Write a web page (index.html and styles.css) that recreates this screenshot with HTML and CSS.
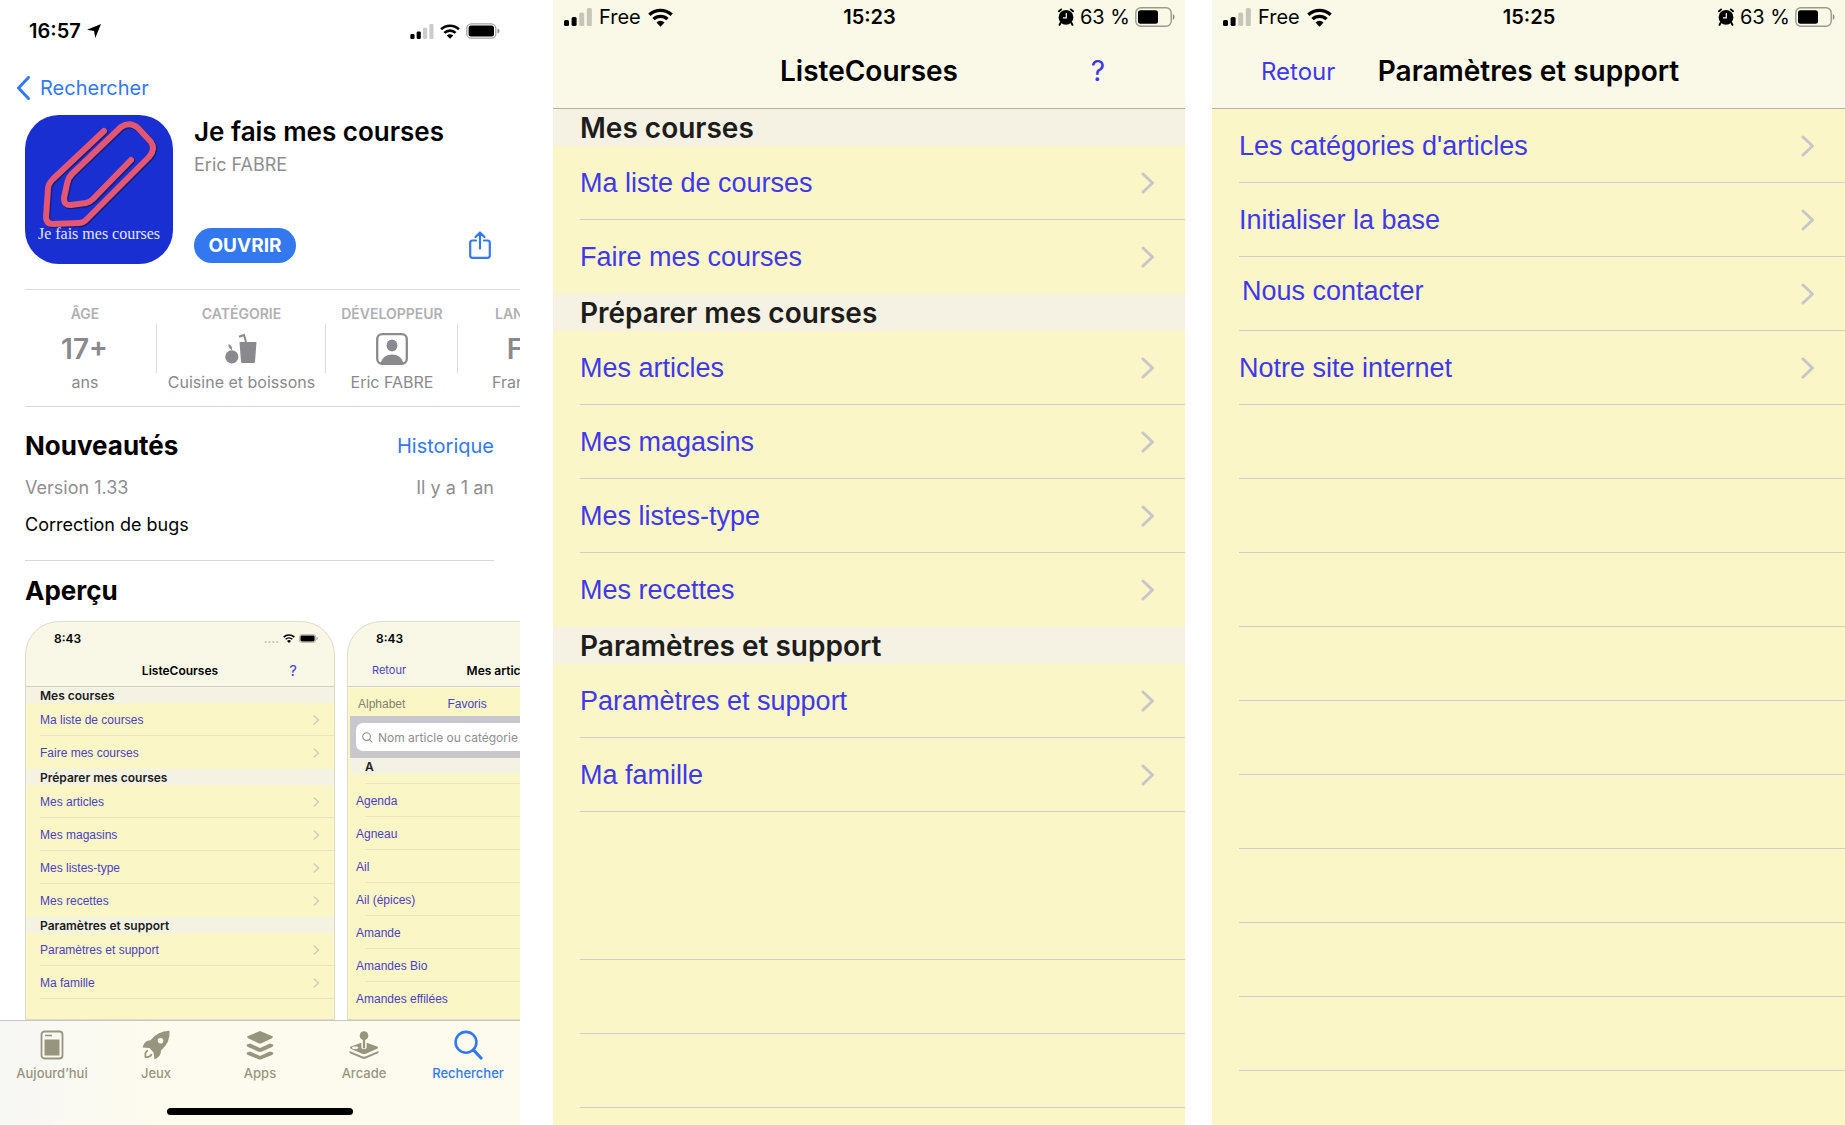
FILE: index.html
```html
<!DOCTYPE html>
<html lang="fr">
<head>
<meta charset="utf-8">
<meta name="viewport" content="width=device-width, initial-scale=1">
<title>Je fais mes courses</title>
<link rel="stylesheet" href="styles.css">
</head>
<body>
<svg class="sprite" aria-hidden="true">
  <symbol id="signal" viewBox="0 0 28 18">
    <rect x="0" y="12" width="5" height="6" rx="1.5"/>
    <rect x="7.600" y="9" width="5" height="9" rx="1.500"/>
    <g class="faint"><rect x="15.200" y="4.500" width="5" height="13.500" rx="1.500"/><rect x="22.800" y="0" width="5" height="18" rx="1.500"/></g>
  </symbol>
  <symbol id="wifi" viewBox="0 0 24 18">
    <g fill="none" stroke="currentColor" stroke-width="3.200">
      <path d="M1.300 6.400 A15.500 15.500 0 0 1 22.700 6.400"/>
      <path d="M5.300 10.600 A9.600 9.600 0 0 1 18.700 10.600"/>
    </g>
    <path d="M12 17.800 L8.100 13.800 A5.600 5.600 0 0 1 15.900 13.800 Z"/>
  </symbol>
  <symbol id="battery-full" viewBox="0 0 34 16">
    <rect x=".8" y=".8" width="29" height="14.400" rx="4.500" fill="none" stroke="#a5a5a5" stroke-width="1.300"/>
    <rect x="2.600" y="2.600" width="25.400" height="10.800" rx="2.500"/>
    <path d="M31.500 5.500 Q33.500 6.400 33.500 8 Q33.500 9.600 31.500 10.500Z" fill="#8c8c8c"/>
  </symbol>
  <symbol id="battery-part" viewBox="0 0 40 20">
    <rect x=".8" y=".8" width="35.400" height="18.400" rx="5" fill="none" stroke="#9b9a91" stroke-width="1.400"/>
    <rect x="3" y="3.200" width="20" height="13.600" rx="2.500"/>
    <path d="M37.800 7 Q39.600 8 39.600 10 Q39.600 12 37.800 13Z" fill="#8d8c84"/>
  </symbol>
  <symbol id="alarm" viewBox="0 0 18 18">
    <circle cx="9" cy="9.300" r="7.400"/>
    <path d="M2 3.300 L4.200 1.400 M16 3.300 L13.800 1.400 M3.800 14.500 L2.600 16.800 M14.200 14.500 L15.400 16.800" stroke="currentColor" stroke-width="1.900" stroke-linecap="round"/>
    <path d="M9.300 5 V9.800 H6" fill="none" stroke="#faf8e6" stroke-width="1.200"/>
  </symbol>
  <symbol id="chevron" viewBox="0 0 14 22">
    <path d="M2 2 L11.500 11 L2 20" fill="none" stroke="currentColor" stroke-width="3" stroke-linecap="round" stroke-linejoin="round"/>
  </symbol>
</svg>

<main class="board">
  <section class="store">
    <div class="store-status">
      <span class="clock">16:57</span>
      <svg class="arrow" viewBox="0 0 14 14"><path d="M14 0 L8.300 14 L7 7 L0 5.800Z"/></svg>
      <span class="status-icons">
        <svg class="i-signal small"><use href="#signal"/></svg>
        <svg class="i-wifi small"><use href="#wifi"/></svg>
        <svg class="i-full"><use href="#battery-full"/></svg>
      </span>
    </div>
    <a class="back" href="#">
      <svg viewBox="0 0 14 24"><path d="M12.500 1.500 L2.500 12 L12.500 22.500" fill="none" stroke="currentColor" stroke-width="3" stroke-linecap="round" stroke-linejoin="round"/></svg>
      Rechercher
    </a>

    <header class="app">
      <div class="app-icon">
        <svg viewBox="0 0 148 148">
          <path d="M79 16 L28 64 Q23 69 23 74 L21 102 Q21 109 28 109 L54 108 Q58 108 61 105 L124 42 Q131 34 126 27 L113 13 Q105 6 96 12 L47 59 Q43 63 42 69 L39 83 Q39 91 46 90 L61 88 Q65 87 68 84 L106 45" fill="none" stroke="#10207a" stroke-width="6.500" stroke-linecap="round" stroke-linejoin="round" transform="translate(1 1)"/>
          <path d="M79 16 L28 64 Q23 69 23 74 L21 102 Q21 109 28 109 L54 108 Q58 108 61 105 L124 42 Q131 34 126 27 L113 13 Q105 6 96 12 L47 59 Q43 63 42 69 L39 83 Q39 91 46 90 L61 88 Q65 87 68 84 L106 45" fill="none" stroke="#e55672" stroke-width="6" stroke-linecap="round" stroke-linejoin="round"/>
        </svg>
        <span class="app-icon-name">Je fais mes courses</span>
      </div>
      <div class="app-info">
        <h1>Je fais mes courses</h1>
        <p>Eric FABRE</p>
        <div class="app-actions">
          <button class="open" type="button">OUVRIR</button>
          <button class="share" type="button" aria-label="Partager">
            <svg viewBox="0 0 22 28"><path d="M7 9.500 H3.500 Q1.200 9.500 1.200 11.800 V24.500 Q1.200 26.800 3.500 26.800 H18.500 Q20.800 26.800 20.800 24.500 V11.800 Q20.800 9.500 18.500 9.500 H15 M11 17.500 V1.500 M6.500 6 L11 1.500 L15.500 6" fill="none" stroke="currentColor" stroke-width="2.200" stroke-linecap="round" stroke-linejoin="round"/></svg>
          </button>
        </div>
      </div>
    </header>

    <dl class="facts">
      <div><dt>ÂGE</dt><dd class="value">17+</dd><dd>ans</dd></div>
      <div class="wide"><dt>CATÉGORIE</dt><dd class="value">
        <svg viewBox="0 0 32 32"><circle cx="6.800" cy="23.800" r="6.600"/><path d="M7 17 Q3 15 3.500 11 Q7.500 12.500 7 17Z"/><path d="M14.500 9 H31.500 L30 28.500 Q29.900 30 28.400 30 H17.600 Q16.100 30 16 28.500Z"/><path d="M14 3.800 L19 2 L21 9" fill="none" stroke="currentColor" stroke-width="2"/></svg>
      </dd><dd>Cuisine et boissons</dd></div>
      <div><dt>DÉVELOPPEUR</dt><dd class="value">
        <svg viewBox="0 0 32 32"><rect x="1.200" y="1.200" width="29.600" height="29.600" rx="5" fill="none" stroke="currentColor" stroke-width="2.300"/><ellipse cx="16" cy="12.500" rx="5.400" ry="6"/><path d="M4.500 30 Q7 21.500 16 21.500 Q25 21.500 27.500 30Z"/></svg>
      </dd><dd>Eric FABRE</dd></div>
      <div><dt>LANGUE</dt><dd class="value">FR</dd><dd>Français</dd></div>
    </dl>

    <section class="news">
      <div class="pair"><h2>Nouveautés</h2><a href="#">Historique</a></div>
      <div class="pair version"><span>Version 1.33</span><span>Il y a 1 an</span></div>
      <p>Correction de bugs</p>
    </section>

    <section class="shots">
      <h2>Aperçu</h2>
      <div class="strip">
        <article class="shot">
          <div class="shot-status"><span>8:43</span><span class="dots">....</span><svg class="mini-wifi"><use href="#wifi"/></svg><svg class="mini-battery"><use href="#battery-full"/></svg></div>
          <div class="shot-nav"><span></span><strong>ListeCourses</strong><a class="help" href="#">?</a></div>
          <h3>Mes courses</h3>
          <ul>
            <li><a href="#">Ma liste de courses<svg><use href="#chevron"/></svg></a></li>
            <li><a href="#">Faire mes courses<svg><use href="#chevron"/></svg></a></li>
          </ul>
          <h3>Préparer mes courses</h3>
          <ul>
            <li><a href="#">Mes articles<svg><use href="#chevron"/></svg></a></li>
            <li><a href="#">Mes magasins<svg><use href="#chevron"/></svg></a></li>
            <li><a href="#">Mes listes-type<svg><use href="#chevron"/></svg></a></li>
            <li><a href="#">Mes recettes<svg><use href="#chevron"/></svg></a></li>
          </ul>
          <h3>Paramètres et support</h3>
          <ul class="closed">
            <li><a href="#">Paramètres et support<svg><use href="#chevron"/></svg></a></li>
            <li><a href="#">Ma famille<svg><use href="#chevron"/></svg></a></li>
          </ul>
        </article>
        <article class="shot second">
          <div class="shot-status"><span>8:43</span></div>
          <div class="shot-nav"><a href="#">Retour</a><strong>Mes articles</strong><span></span></div>
          <div class="modes"><span>Alphabet</span><a href="#">Favoris</a></div>
          <div class="search">
            <label>
              <svg viewBox="0 0 12 12"><path d="M8.400 8.400 L11.200 11.200 M9.200 5 A4.200 4.200 0 1 1 .8 5 A4.200 4.200 0 1 1 9.200 5" fill="none" stroke="currentColor" stroke-width="1.200"/></svg>
              <input type="search" placeholder="Nom article ou catégorie" aria-label="Nom article ou catégorie">
            </label>
          </div>
          <h3>A</h3>
          <ul class="foods">
            <li class="gap"></li>
            <li><a href="#">Agenda</a></li>
            <li><a href="#">Agneau</a></li>
            <li><a href="#">Ail</a></li>
            <li><a href="#">Ail (épices)</a></li>
            <li><a href="#">Amande</a></li>
            <li><a href="#">Amandes Bio</a></li>
            <li><a href="#">Amandes effilées</a></li>
          </ul>
        </article>
      </div>
    </section>

    <nav class="tabs">
      <div class="tab-row">
        <a href="#"><svg viewBox="0 0 30 30"><rect x="4.500" y="1.500" width="21" height="27" rx="3" fill="none" stroke="currentColor" stroke-width="1.800"/><rect x="7.500" y="9.500" width="15" height="16"/><path d="M8 5.500 H15" stroke="currentColor" stroke-width="1.600"/></svg>Aujourd’hui</a>
        <a href="#"><svg viewBox="0 0 30 30"><path fill-rule="evenodd" d="M28.500 .8 Q29.500 12.500 20 20.500 Q20.500 26 13.500 29.500 L12.500 22.500 L8.500 18 L1.500 17.500 Q3 10.500 9.500 10.300 Q16 1.500 28.500 .8Z M19.500 8 A2.800 2.800 0 1 0 19.600 13.600 A2.800 2.800 0 1 0 19.500 8Z"/><path d="M7 20.500 Q3.500 21.500 4.500 27 Q9.500 27.500 10.500 24" fill="none" stroke="currentColor" stroke-width="1.800"/></svg>Jeux</a>
        <a href="#"><svg viewBox="0 0 30 30"><path d="M15 1 L27 6 Q29 7 27 8.200 L17 13 Q15 14 13 13 L3 8.200 Q1 7 3 6Z"/><path d="M2 14.500 L5 13.500 L15 18 L25 13.500 L28 14.500 Q29 16 27 17 L17 21.500 Q15 22.400 13 21.500 L3 17 Q1 16 2 14.500Z"/><path d="M2 22.500 L5 21.500 L15 26 L25 21.500 L28 22.500 Q29 24 27 25 L17 29 Q15 30 13 29 L3 25 Q1 24 2 22.500Z"/></svg>Apps</a>
        <a href="#"><svg viewBox="0 0 32 30"><circle cx="16" cy="5" r="4.600"/><path fill-rule="evenodd" d="M13.200 12.500 L2 16.500 Q0 17.800 2 19 L14 24.200 Q16 25 18 24.200 L30 19 Q32 17.800 30 16.500 L18.800 12.500 V18 Q18.800 19.500 16 19.500 Q13.200 19.500 13.200 18Z M6.500 16.600 A2.500 1.400 0 1 0 6.600 19.200 A2.500 1.400 0 1 0 6.500 16.600Z"/><rect x="14.800" y="9" width="2.400" height="9.500"/><path d="M.6 21.500 L14 27 Q16 27.800 18 27 L31.400 21.500 V23.500 L18 29.400 Q16 30 14 29.400 L.6 23.500Z"/></svg>Arcade</a>
        <a class="current" href="#"><svg viewBox="0 0 30 30"><circle cx="13" cy="12.300" r="10.400" fill="none" stroke="currentColor" stroke-width="2.600"/><path d="M20.500 20 L28 28" stroke="currentColor" stroke-width="3.200" stroke-linecap="round"/></svg>Rechercher</a>
      </div>
      <div class="home-bar"></div>
    </nav>
  </section>

  <section class="screen main-list">
    <header class="top">
      <div class="status">
        <span class="carrier"><svg class="i-signal"><use href="#signal"/></svg>Free<svg class="i-wifi"><use href="#wifi"/></svg></span>
        <span class="clock">15:23</span>
        <span class="power"><svg class="i-alarm"><use href="#alarm"/></svg>63 %<svg class="i-part"><use href="#battery-part"/></svg></span>
      </div>
      <div class="bar"><span></span><h2>ListeCourses</h2><a class="help" href="#">?</a></div>
    </header>
    <h3>Mes courses</h3>
    <ul>
      <li><a href="#">Ma liste de courses<svg><use href="#chevron"/></svg></a></li>
      <li><a href="#">Faire mes courses<svg><use href="#chevron"/></svg></a></li>
    </ul>
    <h3>Préparer mes courses</h3>
    <ul>
      <li><a href="#">Mes articles<svg><use href="#chevron"/></svg></a></li>
      <li><a href="#">Mes magasins<svg><use href="#chevron"/></svg></a></li>
      <li><a href="#">Mes listes-type<svg><use href="#chevron"/></svg></a></li>
      <li><a href="#">Mes recettes<svg><use href="#chevron"/></svg></a></li>
    </ul>
    <h3>Paramètres et support</h3>
    <ul class="closed">
      <li><a href="#">Paramètres et support<svg><use href="#chevron"/></svg></a></li>
      <li><a href="#">Ma famille<svg><use href="#chevron"/></svg></a></li>
      <li class="plain"></li>
      <li></li>
      <li></li>
      <li></li>
    </ul>
  </section>

  <section class="screen settings">
    <header class="top">
      <div class="status">
        <span class="carrier"><svg class="i-signal"><use href="#signal"/></svg>Free<svg class="i-wifi"><use href="#wifi"/></svg></span>
        <span class="clock">15:25</span>
        <span class="power"><svg class="i-alarm"><use href="#alarm"/></svg>63 %<svg class="i-part"><use href="#battery-part"/></svg></span>
      </div>
      <div class="bar"><a class="return" href="#">Retour</a><h2>Paramètres et support</h2><span></span></div>
    </header>
    <ul class="closed">
      <li><a href="#">Les catégories d'articles<svg><use href="#chevron"/></svg></a></li>
      <li><a href="#">Initialiser la base<svg><use href="#chevron"/></svg></a></li>
      <li><a href="#"><span class="contact">Nous contacter</span><svg><use href="#chevron"/></svg></a></li>
      <li><a href="#">Notre site internet<svg><use href="#chevron"/></svg></a></li>
      <li></li><li></li><li></li><li></li><li></li><li></li><li></li><li></li><li></li>
    </ul>
  </section>
</main>
</body>
</html>
```
FILE: styles.css
```css
* { box-sizing: border-box; }
body {
  margin: 0;
  background: #fff;
  color: #000;
  font-family: Inter, "Liberation Sans", sans-serif;
}
h1, h2, h3, p, ul, dl, dd { margin: 0; padding: 0; }
ul { list-style: none; }
a { color: inherit; text-decoration: none; }
button { border: 0; padding: 0; font: inherit; background: none; cursor: pointer; }
svg { display: block; flex: none; fill: currentColor; }
.sprite { position: absolute; width: 0; height: 0; }
.faint { opacity: 0.2; }

.board { display: flex; min-height: 100vh; }
.clock { font-size: 20px; font-weight: 600; }
.i-signal { width: 28px; height: 18px; }
.i-wifi { width: 25px; height: 19px; }
.i-signal.small { width: 24px; height: 15px; }
.i-wifi.small { width: 20px; height: 15px; }
.i-full { width: 34px; height: 16px; }
.i-part { width: 40px; height: 20px; }
.i-alarm { width: 18px; height: 18px; }

/* App Store page */
.store {
  flex: 520 1 0;
  min-width: 0;
  height: 100vh;
  display: flex;
  flex-direction: column;
  overflow: hidden;
}
.store-status {
  display: flex;
  align-items: center;
  gap: 6px;
  height: 62px;
  padding: 0 20px 0 29px;
}
.arrow { width: 14px; height: 14px; }
.status-icons { display: flex; align-items: center; gap: 6px; margin-left: auto; }
.back {
  display: flex;
  align-items: center;
  gap: 10px;
  height: 53px;
  padding: 0 16px 2px;
  color: #3478f0;
  font-size: 20px;
}
.back svg { width: 14px; height: 24px; }

.app {
  display: flex;
  gap: 21px;
  margin-left: 25px;
  padding-bottom: 25px;
  border-bottom: 1px solid #dcdcdd;
}
.app-icon {
  position: relative;
  width: 148px;
  height: 149px;
  flex: none;
  border-radius: 34px;
  background: #1a2fd2;
  overflow: hidden;
}
.app-icon-name {
  position: absolute;
  left: 0;
  right: 0;
  bottom: 20px;
  color: #e4e6f8;
  font: 16px/20px "Liberation Serif", serif;
  text-align: center;
  white-space: nowrap;
}
.app-info { flex: 1; display: flex; flex-direction: column; padding-right: 29px; }
.app-info h1 { font-size: 26px; line-height: 34px; font-weight: 600; white-space: nowrap; }
.app-info p { font-size: 18px; line-height: 32px; color: #8e8e92; }
.app-actions { display: flex; align-items: center; justify-content: space-between; margin-top: auto; height: 36px; margin-bottom: 1px; }
.open {
  width: 102px;
  height: 35px;
  border-radius: 18px;
  background: #3478f0;
  color: #fff;
  font-size: 19px;
  font-weight: 700;
}
.share { color: #3478f0; }
.share svg { width: 22px; height: 28px; }

.facts {
  display: flex;
  margin-left: 25px;
  padding: 14px 0;
  height: 117px;
  border-bottom: 1px solid #d8d8da;
  color: #8a8a8e;
  overflow: hidden;
}
.facts > div {
  flex: 0 0 132px;
  display: grid;
  grid-template-rows: 20px 49px 18px;
  text-align: center;
  font-size: 16px;
  line-height: 18px;
  white-space: nowrap;
}
.facts > .wide { flex-basis: 169px; }
.facts > div:first-child { padding-right: 12px; }
.facts dt { color: #b0b0b4; font-size: 14px; font-weight: 600; line-height: 20px; }
.facts .value {
  display: flex;
  align-items: center;
  justify-content: center;
  font-size: 28px;
  font-weight: 600;
  border-right: 1px solid #dcdcdd;
}
.facts > div:first-child .value { margin-right: -12px; padding-right: 12px; }
.facts > div:last-child .value { border: 0; }
.facts svg { width: 32px; height: 32px; }

.news {
  margin: 0 26px 0 25px;
  padding-top: 19px;
  height: 154px;
  border-bottom: 1px solid #d8d8da;
}
.pair { display: flex; align-items: center; justify-content: space-between; }
.store h2 { font-size: 26px; line-height: 40px; font-weight: 700; }
.pair a { color: #3478f0; font-size: 20px; }
.version { margin-top: 7px; line-height: 30px; font-size: 18px; color: #8e8e92; }
.news p { margin-top: 7px; font-size: 18px; line-height: 30px; }

.shots { flex: 1; min-height: 0; display: flex; flex-direction: column; padding: 10px 0 0 25px; }
.strip { flex: 1; min-height: 0; display: flex; gap: 12px; margin-top: 10px; overflow: hidden; }
.shot {
  flex: 0 0 310px;
  border: 1px solid #dedbc8;
  border-radius: 34px 34px 0 0;
  background: linear-gradient(#f9f7e6 66px, #fbf6c6 66px);
  overflow: hidden;
  font-size: 12px;
}
.shot-status { display: flex; align-items: center; gap: 4px; height: 32px; padding: 0 16px 0 28px; font-size: 12px; font-weight: 600; }
.shot-status .dots { margin-left: auto; color: #b9b8ac; }
.mini-wifi { width: 12px; height: 9px; }
.mini-battery { width: 19px; height: 9px; }
.shot-nav {
  display: grid;
  grid-template-columns: 1fr auto 1fr;
  align-items: center;
  height: 33px;
  padding: 0 24px;
  border-bottom: 1px solid #d2d0c2;
  font-size: 11px;
}
.shot-nav strong { font-weight: 600; font-size: 12px; }
.shot-nav a { color: #4b41c4; }
.shot-nav .help { justify-self: end; padding-right: 13px; font-size: 15px; }
.shot h3 { height: 16px; padding-left: 14px; background: #f4f2e3; font-size: 12px; line-height: 17px; font-weight: 600; color: #1c1c1a; }
.shot li { height: 33px; margin-left: 14px; border-bottom: 1px solid #eae4bd; }
.shot ul:not(.closed) li:last-child { border-color: transparent; }
.shot li a {
  display: flex;
  align-items: center;
  justify-content: space-between;
  height: 100%;
  padding: 1px 14px 0 0;
  color: #4b41c4;
  font-family: "Liberation Sans", Arial, sans-serif;
}
.shot li svg { width: 7px; height: 10px; color: #cfcbb8; }
.modes { display: flex; gap: 42px; height: 29px; padding: 5px 10px 0; line-height: 24px; font-family: "Liberation Sans", Arial, sans-serif; color: #84826c; }
.modes a { color: #4b41c4; }
.search { height: 42px; margin-left: 2px; padding: 7px 6px; background: #c8c7cc; }
.search label { display: flex; align-items: center; gap: 5px; height: 28px; padding-left: 6px; border-radius: 7px; background: #fff; color: #8e8e92; }
.search svg { width: 11px; height: 11px; }
.search input { flex: 1; border: 0; padding: 0; background: none; outline: 0; font: 12px Inter, sans-serif; }
.search input::placeholder { color: #8e8e92; opacity: 1; }
.second h3 { margin-left: 2px; padding-left: 15px; }
.foods .gap { height: 10px; }
.foods li { margin-left: 17px; }
.foods li a { margin-left: -9px; }
.shot .foods li:last-child { border-color: #eae4bd; }

.tabs { border-top: 1px solid #c9c8c0; background: linear-gradient(90deg, #f7f7f5, #fdfbee 30%); height: 105px; flex: none; }
.tab-row { display: grid; grid-template-columns: repeat(5, 1fr); }
.tab-row a {
  display: flex;
  flex-direction: column;
  align-items: center;
  gap: 4px;
  padding-top: 9px;
  color: #98957f;
  font-size: 13px;
  line-height: 18px;
  font-weight: 500;
}
.tab-row svg { width: 30px; height: 30px; }
.tab-row .current { color: #3478f0; }
.home-bar { width: 186px; height: 7px; margin: 26px auto 0; border-radius: 4px; background: #000; }

/* List screens */
.screen { flex: 632 1 0; min-width: 0; background: #fbf6c7; }
.main-list { margin: 0 27px 0 33px; }
.settings { flex-grow: 633; }
.top { height: 109px; background: #faf8e7; border-bottom: 1px solid #b5b3a4; }
.status {
  display: grid;
  grid-template-columns: 1fr auto 1fr;
  align-items: center;
  height: 34px;
  padding: 0 10px 0 11px;
  font-size: 20px;
}
.carrier, .power { display: flex; align-items: center; gap: 7px; }
.power { justify-content: flex-end; gap: 5px; }
.bar {
  display: grid;
  grid-template-columns: 1fr auto 1fr;
  align-items: center;
  height: 74px;
}
.main-list .bar { padding: 0 80px; }
.settings .bar { padding: 0 49px; }
.bar h2 { font-size: 28px; font-weight: 600; white-space: nowrap; }
.bar a { color: #3f38ee; font-size: 24px; }
.bar .help { justify-self: end; font-size: 28px; }
.screen h3 { height: 37px; padding-left: 27px; background: #f5f2e4; color: #1d1d1b; font-size: 28px; line-height: 38px; font-weight: 600; }
.screen li { height: 74px; margin-left: 27px; border-bottom: 1px solid #cfcdca; }
.screen ul:not(.closed) li:last-child, .screen .plain { border-color: transparent; }
.screen li a {
  display: flex;
  align-items: center;
  justify-content: space-between;
  height: 100%;
  padding: 1px 30px 0 0;
  color: #3f38ee;
  font-family: "Liberation Sans", Arial, sans-serif;
  font-size: 27px;
}
.screen li svg { width: 14px; height: 22px; color: #c8c6c9; }
.contact { padding: 0 0 6px 3px; }
```
